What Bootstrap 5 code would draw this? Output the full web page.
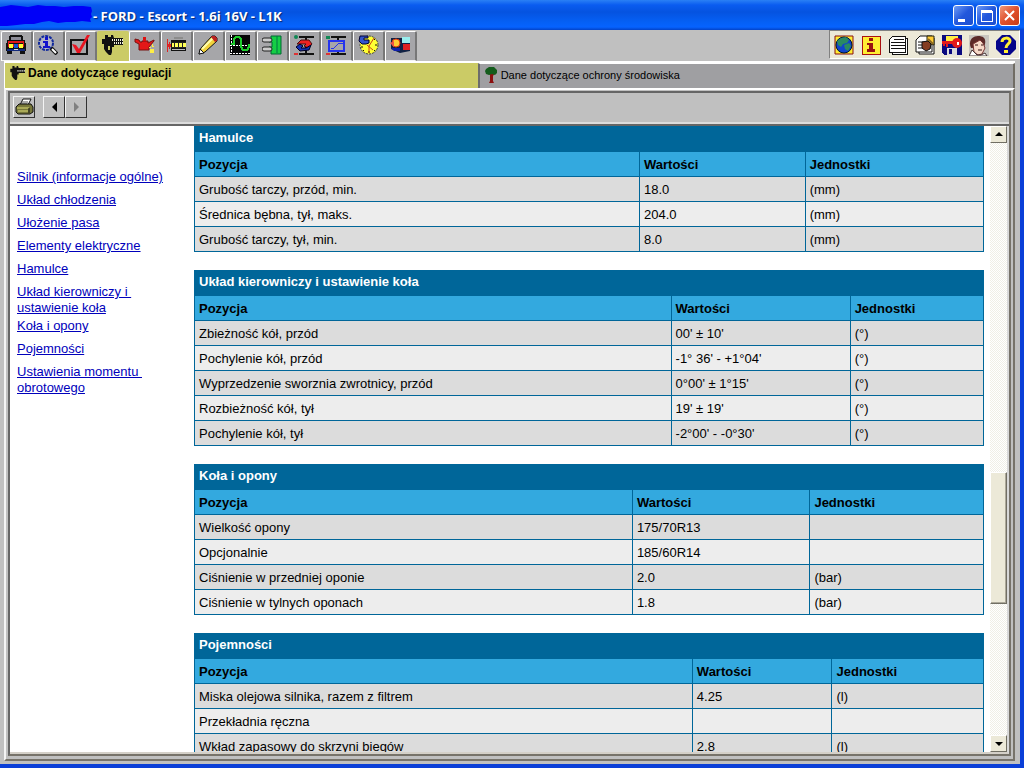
<!DOCTYPE html>
<html lang="pl">
<head>
<meta charset="utf-8">
<meta name="viewport" content="width=device-width, initial-scale=1">
<title>FORD - Escort - 1.6i 16V - L1K</title>
<link href="https://cdn.jsdelivr.net/npm/bootstrap@5.3.0/dist/css/bootstrap.min.css" rel="stylesheet">
<style>
:root{--face:#c0c0c0;--khaki:#cbcb66;--deep:#069;--sky:#33a9df;--edge:#0a3fd8}
body{font-family:"Liberation Sans",Arial,sans-serif;font-size:13px;line-height:16px;color:#000;background:var(--face)}
button{color:#000}
svg{display:block}
.window-frame{border-right:4px solid var(--edge);border-bottom:4px solid var(--edge)}
.title-bar{height:30px;margin-right:-4px;background:linear-gradient(#2a80f5 0,#0a5cf0 5px,#0553e0 12px,#0560f5 22px,#0663ff 27px,#0343c8 30px);color:#fff}
.title-text{font:bold 13px/16px "Open Sans","Noto Sans",sans-serif;text-shadow:1px 1px 1px #0a246a;padding-top:2px}
.scribble{width:93px;height:30px}
.win-btns{gap:2px}
.win-btn{width:21px;height:21px;padding:0;border:1px solid #fff;border-radius:3px;background:linear-gradient(135deg,#6f9cf5,#2257dc 50%,#1d4fd0)}
.win-btn.shut{background:linear-gradient(135deg,#f09a7c,#e0502c 50%,#c83c18)}
.tool-strip{height:31px;padding-left:1px;background:var(--face)}
.tool-btn{width:32px;height:30px;padding:0 0 2px 4px;border:1px solid;border-color:#fff #777 #f4f4f4 #fff;border-right-width:2px;border-radius:2px 2px 0 0;background:#a6a6a9}
.tool-btn.current{background:var(--khaki);border-color:var(--khaki)}
.help-strip{height:29px;width:191px;padding:0 4px;gap:7px;background:#ece9d8;border:1px solid;border-color:#808080 #fff #fff #808080}
.help-btn{padding:0;border:0;background:none;width:20px;height:20px}
.tab-strip{margin:0 5px 0 4px;border-top:2px solid #fff;border-left:1px solid #fff}
.sheet-tab{height:25px;padding:0 0 0 5px;border:0;text-align:left;flex:1 1 0;gap:4px}
.sheet-tab.current{flex:0 0 46.8%;gap:2px;background:var(--khaki);font:bold 12px/16px "Liberation Sans",Arial,sans-serif;padding-bottom:5px}
.sheet-tab.other{background:#9f9fa2;font-size:11px;border-left:2px solid #6c6c6c;border-top:1px solid #fff;border-right:2px solid #706c64;padding-bottom:2px}
.sheet-panel{min-height:0;margin:0 5px 3px 4px;padding:1px 2px 3px 2px;border:2px solid;border-color:#fff #77736a #77736a #f4f4f4}
.sheet-inner{border:2px solid;border-color:#666 #77736a #77736a #666}
.print-bar{height:33px;padding:0 3px 3px;border-bottom:2px solid #666;box-shadow:inset 0 -2px #dcdcdc}
.raised{width:22px;height:22px;padding:0;border:1px solid;border-color:#f4f4f4 #333 #333 #f4f4f4;background:var(--face)}
.doc-area{border-right:2px solid #d8d8d8;border-bottom:2px solid #d4d0c8}
.side-links{width:184px;padding:43px 0 0 7px}
.side-links li{min-height:23px;padding-bottom:2px}
.side-links a{color:#00b;text-decoration:underline}
.tables-col{padding-right:6px}
.spec{width:100%;margin:0 0 18px;table-layout:fixed;border-collapse:collapse}
.spec th,.spec td{height:25px;padding:2px 4px 0;border:1px solid var(--deep);line-height:16px;vertical-align:middle}
.spec .heading th{background:var(--deep);color:#fff;padding:0 4px 3px}
.spec .names th{background:var(--sky)}
.spec tbody tr:nth-child(odd) td{background:#dcdcdc}
.spec tbody tr:nth-child(even) td{background:#ededed}
.scroller{width:17px;background:repeating-conic-gradient(#fff 0 25%,#f0efe6 0 50%) 0 0/2px 2px}
.scroll-btn{height:17px;padding:0;border:1px solid;border-color:#fff #716f64 #716f64 #fff;background:#ece9d8}
.thumb{border:1px solid;border-color:#fff #716f64 #716f64 #fff;background:#ece9d8;box-shadow:inset -1px -1px #aca899}
.grow-before{flex:330 1 0}.grow-thumb{flex:131 1 0}.grow-after{flex:131 1 0}
</style>
</head>
<body class="overflow-hidden">
<div class="window-frame vh-100 d-flex flex-column">
<header class="title-bar d-flex align-items-center flex-shrink-0 pe-1">
<svg class="scribble" viewBox="0 0 93 30"><path d="M0 7l6-1 5-1 9 1 8 1 10-2 8 1 9 0 9 1 10-1 9 0 8 1 1 4-1 3 1 3-2 2 1 3-9-1-7 1-9 0-8 1-9-2-7 1-8 2-9 0-8 1-10 1L0 26Z" fill="#0000f8"/></svg>
<div class="title-text flex-grow-1 text-nowrap">- FORD - Escort - 1.6i 16V - L1K</div>
<div class="win-btns d-flex">
<button class="win-btn" aria-label="Minimalizuj"><svg width="19" height="19"><path d="M4 13h7v3h-7z" fill="#fff"/></svg></button>
<button class="win-btn" aria-label="Maksymalizuj"><svg width="19" height="19" shape-rendering="crispEdges"><path d="M4 5h11v10H4z" fill="none" stroke="#fff"/><path d="M4 4h11v3H4z" fill="#fff"/></svg></button>
<button class="win-btn shut" aria-label="Zamknij"><svg width="19" height="19"><path d="M5 5l9 9M14 5l-9 9" stroke="#fff" stroke-width="2"/></svg></button>
</div>
</header>

<nav class="tool-strip d-flex justify-content-between align-items-end flex-shrink-0" aria-label="Narzędzia">
<div class="d-flex">
<button class="tool-btn" aria-label="Pojazd"><svg width="20" height="20" shape-rendering="crispEdges"><path d="M4 0h12v1h1v4h2v3h1v8h-1v3h-5v-3H6v3H1v-3H0V8h1V5h2V1h1z" fill="#111"/><path d="M5 2h10v3H5z" fill="#8c8c98"/><path d="M2 6h16v6H2z" fill="#e01818"/><path d="M3 8h14v1H3z" fill="#111"/><path d="M8 9h4v4H8z" fill="#15c"/><path d="M3 9h4v4H3zM13 9h4v4h-4z" fill="#ff3"/><path d="M1 14h18v2H1z" fill="#122a7c"/><path d="M8 14h4v1H8z" fill="#ddd"/></svg></button>
<button class="tool-btn" aria-label="Identyfikacja"><svg width="20" height="20"><circle cx="8" cy="8" r="7" fill="#b4b4c4" stroke="#112a9c" stroke-width="2" stroke-dasharray="3 1"/><path d="M7 2h3v3H7zM5 6h5v5h2v2H5v-2h2V8H5z" fill="#11c"/><path d="M13 13l6 6" stroke="#111" stroke-width="4"/><path d="M14 14l4 4" stroke="#fff" stroke-width="2"/></svg></button>
<button class="tool-btn" aria-label="Kontrola"><svg width="20" height="20"><path d="M1 5h16v14H1z" fill="none" stroke="#111" stroke-width="2"/><path d="M2 9l4 1 3 4L17 0h3L10 18H7z" fill="#e91420"/></svg></button>
<button class="tool-btn current" aria-label="Regulacja" aria-current="page"><svg width="22" height="20"><path d="M3 0h3v2h3V0h2l1 3h9v7h-9v2h-2v5l-1 3H7l-3-3-2-3V9H0V4h3z" fill="#111"/><path d="M10 5h11M12 8h9" stroke="#eed" stroke-width="2" stroke-dasharray="1 1"/><path d="M6 11h2v4H6z" fill="#cbcb66"/></svg></button>
<button class="tool-btn" aria-label="Smarowanie"><svg width="22" height="20"><path d="M1 4l4 1 1 2h2V6h6v2l6-3v1l-5 6v3H5V9L1 7z" fill="#e31818" stroke="#711"/><path d="M9 2h3v4H9z" fill="#d11"/><path d="M18 9h1v2h1v1h-2zM16 14h4v4h-4zM15 12h2v1h-2z" fill="#fe4"/></svg></button>
<button class="tool-btn" aria-label="Pasek rozrządu"><svg width="22" height="20" shape-rendering="crispEdges"><path d="M1 4h1v13H1zM2 9h3v3H2zM3 7h1v7H3z" fill="#d22"/><path d="M5 5h15v11H5z" fill="#111"/><path d="M8 2h9v2H8z" fill="#8c8c8c"/><path d="M6 8h14v4H6z" fill="#ff5"/><path d="M5 7h15v1H5zM5 12h15v1H5zM8 8h1v4H8zM12 8h1v4h-1zM16 8h1v4h-1z" fill="#222"/><path d="M6 14h13v1H6z" fill="#bbb"/></svg></button>
<button class="tool-btn" aria-label="Notatki"><svg width="20" height="20"><path d="M1 19l2-6L14 1h3l2 2v3L7 17z" fill="#f2d23c" stroke="#111"/><path d="M4 14L15 3" stroke="#ffa" stroke-width="2"/><path d="M13 2l1-1h3l2 2v3l-2 1z" fill="#b22"/><path d="M1 19l1-5 4 4z" fill="#fff" stroke="#111"/></svg></button>
<button class="tool-btn" aria-label="Oscyloskop"><svg width="20" height="20" shape-rendering="crispEdges"><path d="M0 0h20v20H0z" fill="#050505"/><path d="M1 0v19M0 10h20M0 18h20" stroke="#fff" stroke-dasharray="2 1"/><path d="M1 9h3V4l2-2h3l2 2v8l2 3h4l2-3V9" fill="none" stroke="#1ecb2c" stroke-width="2"/></svg></button>
<button class="tool-btn" aria-label="Złącza"><svg width="20" height="20"><path d="M9 1h10v18H9V15H7v-3h3V7H7V4h2z" fill="#15ce45" stroke="#063"/><path d="M15 1v17" stroke="#074"/><rect x="0" y="3" width="10" height="4" rx="2" fill="#ccc" stroke="#222"/><rect x="0" y="12" width="10" height="4" rx="2" fill="#ccc" stroke="#222"/></svg></button>
<button class="tool-btn" aria-label="Obieg"><svg width="20" height="20"><path d="M5 2h15M5 19h15M12 2v17" stroke="#111" stroke-width="2"/><circle cx="2" cy="2" r="2" fill="#185"/><path d="M0 18h4v2H0z" fill="#d33"/><path d="M3 9l4-4h8l3 4-4 4-4-2 2-2H8z" fill="#e22" stroke="#411"/><path d="M17 10l-2 5-9 1-4-4 4-3 3 2-2 2h5z" fill="#1230b0" stroke="#002"/></svg></button>
<button class="tool-btn" aria-label="Schematy"><svg width="20" height="20" shape-rendering="crispEdges"><path d="M5 2h15M5 19h15M12 2v17" stroke="#111" stroke-width="2"/><path d="M3 6h15v10H3z" fill="#a6a6a9" stroke="#2433ee" stroke-width="2"/><path d="M5 13h3l5-5h4" fill="none" stroke="#2433ee"/><path d="M0 1h4v3H0z" fill="#185"/><path d="M0 18h4v2H0z" fill="#d33"/></svg></button>
<button class="tool-btn" aria-label="Czas pracy"><svg width="22" height="20"><circle cx="11" cy="10" r="9" fill="#ff3" stroke="#443" stroke-dasharray="2 1"/><path d="M11 16v2M3 12h2M17 10h2M5 16l1-1M16 15l1 1M16 5l1-1" stroke="#111"/><path d="M11 18v-7l5-8M9 10l6 5" stroke="#c41" fill="none"/><path d="M2 1h8v2H6v2h5v3l-3 1H4L1 6z" fill="#35c" stroke="#003"/></svg></button>
<button class="tool-btn" aria-label="Podzespoły"><svg width="22" height="20"><path d="M1 3h19v13l-10 2-9-4z" fill="#124"/><path d="M12 2h8v6h-8z" fill="#9ee"/><path d="M13 9h7v6h-7z" fill="#d22"/><circle cx="6" cy="8" r="4" fill="#fc3" stroke="#d31"/><path d="M0 8l4-2v6z" fill="#e54"/><path d="M1 13h9v3H4z" fill="#12a"/></svg></button>
</div>
<div class="help-strip d-flex align-items-center align-self-start">
<button class="help-btn" aria-label="Internet"><svg width="20" height="20"><path d="M1 1h18v18H1z" fill="#fe3" stroke="#811"/><circle cx="10" cy="10" r="8" fill="#14c" stroke="#013"/><path d="M3 6l4-3 5-1 3 3-2 3-4 1-2 3-3-2zM10 10l5-2 2 3-3 5-3-2z" fill="#2a8a62"/></svg></button>
<button class="help-btn" aria-label="Informacje"><svg width="20" height="20" shape-rendering="crispEdges"><path d="M1 1h18v18H1z" fill="#fe3" stroke="#a11"/><path d="M8 3h4v3H8zM6 8h6v6h2v3H6v-3h2v-4H6z" fill="#911"/></svg></button>
<button class="help-btn" aria-label="Dokumenty"><svg width="20" height="20" shape-rendering="crispEdges"><path d="M4 3h15v16H4z" fill="#fff" stroke="#111"/><path d="M5 1h12v16H1V5z" fill="#fff" stroke="#111"/><path d="M6 4h10M3 7h15M3 10h15M3 13h15" stroke="#111"/></svg></button>
<button class="help-btn" aria-label="Edytuj dokument"><svg width="20" height="20"><path d="M4 3h15v16H4z" fill="#fff" stroke="#111"/><path d="M5 1h12v16H1V5z" fill="#fff" stroke="#111"/><path d="M3 7h13M3 10h13M3 13h13" stroke="#111"/><path d="M12 1h7v9l-7-2z" fill="#fc3" stroke="#221"/><path d="M13 4l5 5" stroke="#862" stroke-width="2"/><path d="M7 7l6-1 3 3-1 5-4 2-4-3z" fill="#853d20" stroke="#111"/></svg></button>
<button class="help-btn" aria-label="Zapisz klucz"><svg width="20" height="20" shape-rendering="crispEdges"><path d="M0 0h20v20H2l-2-2z" fill="#0a0a80"/><path d="M4 1h12v5H4z" fill="#fe4"/><path d="M5 13h10v7H5z" fill="#ddd"/><path d="M7 14h3v5H7z" fill="#0a0a80"/><circle cx="15" cy="8" r="5" fill="#e31a1a" shape-rendering="auto"/><path d="M0 6h11v3H6v3H4V9H3v2H1V9H0z" fill="#e31a1a"/><path d="M15 7h2v3h-2z" fill="#fff"/></svg></button>
<button class="help-btn" aria-label="Kontakt"><svg width="20" height="21"><path d="M0 0h20v21H0z" fill="#c9c6c0"/><path d="M2 13C-1 6 3 1 9 1c6 0 8 3 7 8l-1 3z" fill="#5b2a28"/><path d="M4 9l7-4 3 3 2 5-3 6-4 1-4-3z" fill="#f6d9c8" stroke="#733"/><path d="M0 21l3-6 5 5h4l4-2 2 3z" fill="#fff" stroke="#433"/><path d="M6 10h3M12 10h2M9 15h4" stroke="#311"/></svg></button>
<button class="help-btn" aria-label="Pomoc"><svg width="20" height="20"><path d="M6 0h8l6 6v8l-6 6H6l-6-6V6z" fill="#05058a"/><path d="M6 7c0-5 8-5 8-1 0 3-4 3-4 7" fill="none" stroke="#fe3" stroke-width="3"/><path d="M8 15h4v3H8z" fill="#fe3"/></svg></button>
</div>
</nav>

<div class="tab-strip d-flex flex-shrink-0">
<button class="sheet-tab current d-flex align-items-center"><svg width="16" height="14" viewBox="0 0 22 20"><path d="M3 0h3v2h3V0h2l1 3h9v7h-9v2h-2v5l-1 3H7l-3-3-2-3V9H0V4h3z" fill="#111"/><path d="M10 7h11" stroke="#eed" stroke-width="2" stroke-dasharray="2 1"/></svg>Dane dotyczące regulacji</button>
<button class="sheet-tab other d-flex align-items-center"><svg width="12" height="16"><path d="M5 8l-2-2 2 1h3l2-1-2 3v5l1 2H4l1-2z" fill="#8c1010"/><path d="M1 2l3-2h5l3 3v3l-2 2-3-1-3 1-3-1-1-3z" fill="#145c1c"/></svg>Dane dotyczące ochrony środowiska</button>
</div>

<main class="sheet-panel flex-grow-1 d-flex flex-column">
<div class="sheet-inner flex-grow-1 d-flex flex-column overflow-hidden">
<div class="print-bar d-flex align-items-center flex-shrink-0">
<button class="raised me-2" aria-label="Drukuj"><svg width="20" height="20"><path d="M6 8l3-6h8l-3 6z" fill="#fff" stroke="#111"/><path d="M8 5h6M7 7h6" stroke="#555"/><path d="M2 10l3-3h12l2 3v5l-3 2H4l-2-2z" fill="#77773a" stroke="#111"/><path d="M3 11h12M4 14h10" stroke="#dd7"/><path d="M15 11v5" stroke="#111"/></svg></button>
<button class="raised" aria-label="Wstecz"><svg width="20" height="20"><path d="M13 5v10l-5-5z"/></svg></button>
<button class="raised" aria-label="Dalej"><svg width="20" height="20"><path d="M8 5v10l5-5z" fill="#808080"/></svg></button>
</div>
<div class="doc-area bg-white d-flex flex-grow-1 overflow-hidden">
<ul class="side-links list-unstyled m-0 flex-shrink-0">
<li><a href="#silnik">Silnik (informacje ogólne)</a></li>
<li><a href="#chlodzenie">Układ chłodzenia</a></li>
<li><a href="#pas">Ułożenie pasa</a></li>
<li><a href="#elektryka">Elementy elektryczne</a></li>
<li><a href="#hamulce">Hamulce</a></li>
<li><a href="#kierowniczy">Układ kierowniczy i&nbsp;<br>ustawienie koła</a></li>
<li><a href="#kola">Koła i opony</a></li>
<li><a href="#pojemnosci">Pojemności</a></li>
<li><a href="#momenty">Ustawienia momentu&nbsp;<br>obrotowego</a></li>
</ul>
<div class="tables-col flex-grow-1">
<table class="spec" id="hamulce">
<colgroup><col style="width:56.4%"><col style="width:21%"><col></colgroup>
<thead><tr class="heading"><th colspan="3">Hamulce</th></tr><tr class="names"><th>Pozycja</th><th>Wartości</th><th>Jednostki</th></tr></thead>
<tbody><tr><td>Grubość tarczy, przód, min.</td><td>18.0</td><td>(mm)</td></tr>
<tr><td>Średnica bębna, tył, maks.</td><td>204.0</td><td>(mm)</td></tr>
<tr><td>Grubość tarczy, tył, min.</td><td>8.0</td><td>(mm)</td></tr></tbody></table>
<table class="spec" id="kierowniczy">
<colgroup><col style="width:60.4%"><col style="width:22.7%"><col></colgroup>
<thead><tr class="heading"><th colspan="3">Układ kierowniczy i ustawienie koła</th></tr><tr class="names"><th>Pozycja</th><th>Wartości</th><th>Jednostki</th></tr></thead>
<tbody><tr><td>Zbieżność kół, przód</td><td>00' ± 10'</td><td>(°)</td></tr>
<tr><td>Pochylenie kół, przód</td><td>-1° 36' - +1°04'</td><td>(°)</td></tr>
<tr><td>Wyprzedzenie sworznia zwrotnicy, przód</td><td>0°00' ± 1°15'</td><td>(°)</td></tr>
<tr><td>Rozbieżność kół, tył</td><td>19' ± 19'</td><td>(°)</td></tr>
<tr><td>Pochylenie kół, tył</td><td>-2°00' - -0°30'</td><td>(°)</td></tr></tbody></table>
<table class="spec" id="kola">
<colgroup><col style="width:55.5%"><col style="width:22.5%"><col></colgroup>
<thead><tr class="heading"><th colspan="3">Koła i opony</th></tr><tr class="names"><th>Pozycja</th><th>Wartości</th><th>Jednostki</th></tr></thead>
<tbody><tr><td>Wielkość opony</td><td>175/70R13</td><td></td></tr>
<tr><td>Opcjonalnie</td><td>185/60R14</td><td></td></tr>
<tr><td>Ciśnienie w przedniej oponie</td><td>2.0</td><td>(bar)</td></tr>
<tr><td>Ciśnienie w tylnych oponach</td><td>1.8</td><td>(bar)</td></tr></tbody></table>
<table class="spec" id="pojemnosci">
<colgroup><col style="width:63.1%"><col style="width:17.7%"><col></colgroup>
<thead><tr class="heading"><th colspan="3">Pojemności</th></tr><tr class="names"><th>Pozycja</th><th>Wartości</th><th>Jednostki</th></tr></thead>
<tbody><tr><td>Miska olejowa silnika, razem z filtrem</td><td>4.25</td><td>(l)</td></tr>
<tr><td>Przekładnia ręczna</td><td></td><td></td></tr>
<tr><td>Wkład zapasowy do skrzyni biegów</td><td>2.8</td><td>(l)</td></tr></tbody></table>
</div>
<div class="scroller d-flex flex-column flex-shrink-0">
<button class="scroll-btn" aria-label="W górę"><svg width="15" height="15"><path d="M4 9h8L8 5z"/></svg></button>
<div class="grow-before"></div><div class="thumb grow-thumb"></div><div class="grow-after"></div>
<button class="scroll-btn" aria-label="W dół"><svg width="15" height="15"><path d="M4 6h8l-4 4z"/></svg></button>
</div>
</div>
</div>
</main>
</div>
<script src="https://cdn.jsdelivr.net/npm/bootstrap@5.3.0/dist/js/bootstrap.bundle.min.js"></script>
</body>
</html>
